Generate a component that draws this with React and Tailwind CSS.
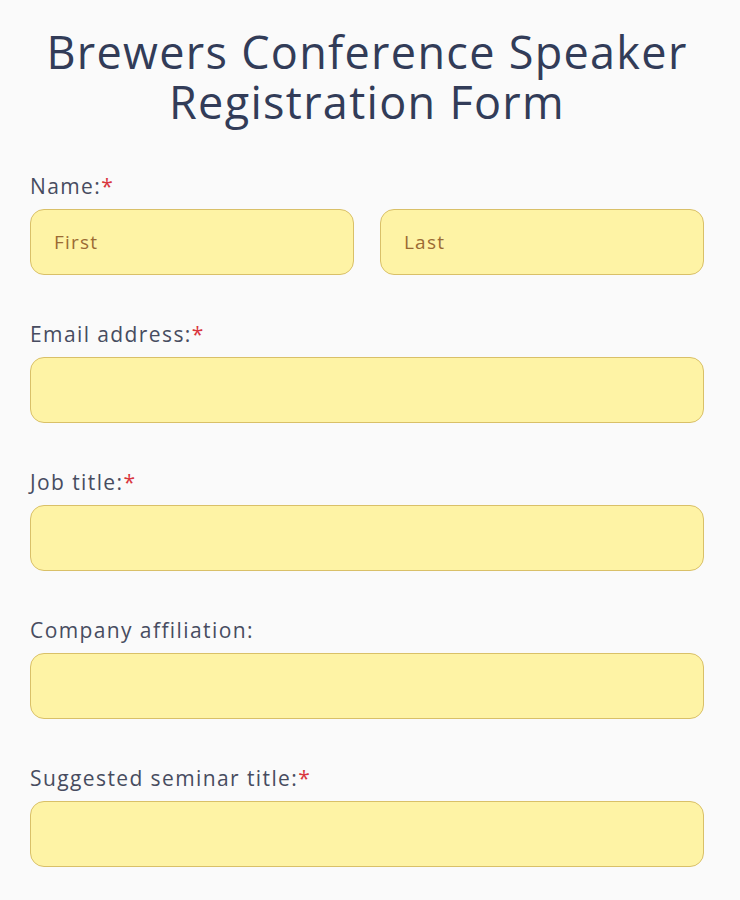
import React from 'react';

const Label = ({ text, required }) => (
  <label className="block text-[21px] leading-[28px] text-[#474c60] tracking-[1.4px]">
    {text}
    {required && <span className="text-[#d9363e]">*</span>}
  </label>
);

const inputCls =
  'block w-full h-[66px] rounded-[14px] border border-[#d9c068] bg-[#fef3a5] px-[23px] text-[19px] tracking-[1.2px] text-[#8a5a2b] placeholder-[#9b6a34] outline-none';

const Field = ({ label, required }) => (
  <div className="mt-[45px]">
    <Label text={label} required={required} />
    <input className={inputCls + ' mt-[9px]'} />
  </div>
);

const App = () => {
  return (
    <div
      className="min-h-[900px] bg-[#fafafa] pl-[30px] pr-[36px] pt-[27px]"
      style={{ fontFamily: '"Open Sans", "Liberation Sans", sans-serif' }}
    >
      <h1 className="text-center text-[45px] leading-[50px] text-[#323c58] tracking-[1.3px]">
        Brewers Conference Speaker
        <br />
        Registration Form
      </h1>

      <div className="mt-[45px]">
        <Label text="Name:" required />
        <div className="mt-[9px] flex gap-[26px]">
          <input className={inputCls} placeholder="First" />
          <input className={inputCls} placeholder="Last" />
        </div>
      </div>

      <Field label="Email address:" required />
      <Field label="Job title:" required />
      <Field label="Company affiliation:" />
      <Field label="Suggested seminar title:" required />
    </div>
  );
};

export default App;
